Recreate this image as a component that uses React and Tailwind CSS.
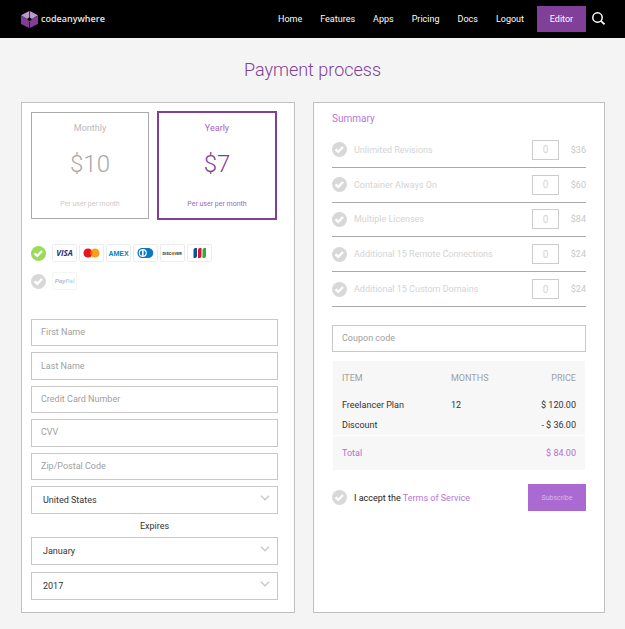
import { useState } from "react";

const NAV_LINKS = ["Home", "Features", "Apps", "Pricing", "Docs", "Logout"];

const FIELDS = ["First Name", "Last Name", "Credit Card Number", "CVV", "Zip/Postal Code"];

const ADDONS = [
  { name: "Unlimited Revisions", price: "$36" },
  { name: "Container Always On", price: "$60" },
  { name: "Multiple Licenses", price: "$84" },
  { name: "Additional 15 Remote Connections", price: "$24" },
  { name: "Additional 15 Custom Domains", price: "$24" },
];

function Logo() {
  return (
    <a href="#" className="flex items-center gap-[3px]" aria-label="codeanywhere">
      <svg viewBox="0 0 17 17" className="h-[17px] w-[17px]" aria-hidden="true">
        <path d="M8.200 0 L0 4.200 L6 8 L8.200 6.500 Z" fill="#b99aca" />
        <path d="M8.800 0 L17 4.200 L11 8 L8.800 6.500 Z" fill="#b99aca" />
        <path d="M0 4.400 L6.500 8.400 L8.200 10.300 V17 L0 13 Z" fill="#803c96" />
        <path d="M17 4.400 L10.500 8.400 L8.800 10.300 V17 L17 13 Z" fill="#803c96" />
      </svg>
      <span className="font-['Open_Sans',sans-serif] text-[9px] leading-4 font-semibold text-gray-200">
        codeanywhere
      </span>
    </a>
  );
}

function Header() {
  return (
    <header className="flex h-[38px] items-center justify-between bg-black pr-5 pl-[21px]">
      <Logo />
      <div className="flex items-center">
        <nav className="flex items-center gap-[18px] pr-[13px] text-white">
          {NAV_LINKS.map((label) => (
            <a key={label} href="#">
              {label}
            </a>
          ))}
        </nav>
        <button type="button" className="h-[26px] w-[49px] bg-[#803f98] text-white">
          Editor
        </button>
        <button type="button" aria-label="Search" className="pl-[5px] text-white">
          <svg viewBox="0 0 14 14" className="h-[14px] w-[14px]" fill="none" stroke="currentColor">
            <circle cx="6.500" cy="5.500" r="4.700" strokeWidth="1.500" />
            <path d="M9.800 8.900 L13.500 12.300" strokeWidth="1.700" />
          </svg>
        </button>
      </div>
    </header>
  );
}

function RoundCheck({ type = "checkbox", ...props }) {
  return (
    <span className="grid h-[15px] w-[15px] shrink-0">
      <input
        type={type}
        className="col-start-1 row-start-1 h-[15px] w-[15px] appearance-none rounded-full bg-[#d8d8d8] checked:bg-[#9bdb5c]"
        {...props}
      />
      <svg
        viewBox="0 0 15 15"
        className="pointer-events-none col-start-1 row-start-1 h-[15px] w-[15px]"
        fill="none"
        stroke="white"
        strokeWidth="2.400"
        aria-hidden="true"
      >
        <path d="M3.500 7.300 L6.300 9.800 L11 5" />
      </svg>
    </span>
  );
}

function Plan({ name, price, selected, onSelect }) {
  return (
    <button
      type="button"
      aria-pressed={selected}
      onClick={onSelect}
      className={
        selected
          ? "flex h-[109px] flex-1 flex-col items-center justify-between border-2 border-[#803f98] pt-2 pb-[7px] text-[#a566bd]"
          : "flex h-[107px] flex-1 flex-col items-center justify-between border border-[#a9a9a9] pt-2 pb-[7px] text-[#b9b9b9]"
      }
    >
      <span>{name}</span>
      <span
        className={
          selected
            ? "pb-1 text-2xl leading-7 font-light text-[#803f98]"
            : "pb-1 text-2xl leading-7 font-light text-[#a9a9a9]"
        }
      >
        {price}
      </span>
      <span className={selected ? "text-[7px]" : "text-[7px] text-[#d0c8c8]"}>
        Per user per month
      </span>
    </button>
  );
}

function CardBadge({ label, children }) {
  return (
    <svg viewBox="0 0 25 18" className="h-[18px] w-[25px]" role="img" aria-label={label}>
      <rect x="0.500" y="0.500" width="24" height="17" rx="1.500" fill="white" stroke="#ececec" />
      {children}
    </svg>
  );
}

function CardBadges() {
  return (
    <span className="flex gap-[2px]">
      <CardBadge label="Visa">
        <text x="12.500" y="12" textAnchor="middle" fontSize="8" fontWeight="700" fontStyle="italic" fontFamily="Open Sans" fill="#26337a">
          VISA
        </text>
      </CardBadge>
      <CardBadge label="Mastercard">
        <circle cx="9" cy="9" r="4.500" fill="#e8141f" />
        <circle cx="16" cy="9" r="4.500" fill="#f99f1b" />
        <path d="M12.500 6.200 A4.500 4.500 0 0 1 12.500 11.800 A4.500 4.500 0 0 1 12.500 6.200 Z" fill="#ff5f00" />
      </CardBadge>
      <CardBadge label="American Express">
        <text x="12.500" y="12" textAnchor="middle" fontSize="7" fontWeight="700" fontFamily="Liberation Sans" fill="#0d7fc0">
          AMEX
        </text>
      </CardBadge>
      <CardBadge label="Diners Club">
        <path d="M9 4 H15 C22 4 22 14 15 14 H9 C3 14 3 4 9 4 Z" fill="#0a79be" />
        <circle cx="9.800" cy="9" r="4" fill="white" />
        <path d="M9 6.200 C6.200 7.200 6.200 10.800 9 11.800 Z M10.600 6.200 C13.400 7.200 13.400 10.800 10.600 11.800 Z" fill="#0a79be" />
      </CardBadge>
      <CardBadge label="Discover">
        <text x="2.500" y="11" fontSize="4" fontWeight="700" fontFamily="Roboto" fill="#333333">
          DISC
        </text>
        <circle cx="13" cy="9.500" r="1.600" fill="#f47b20" />
        <text x="14.500" y="11" fontSize="4" fontWeight="700" fontFamily="Roboto" fill="#333333">
          VER
        </text>
      </CardBadge>
      <CardBadge label="JCB">
        <path d="M8.500 4 H10 V12 Q10 14 8 14 H6.500 V6 Q6.500 4 8.500 4 Z" fill="#0b4ea2" />
        <path d="M13 4 H14.500 V12 Q14.500 14 12.500 14 H11 V6 Q11 4 13 4 Z" fill="#d7182a" />
        <path d="M17.500 4 H19 V12 Q19 14 17 14 H15.500 V6 Q15.500 4 17.500 4 Z" fill="#2fac3c" />
      </CardBadge>
    </span>
  );
}

function PayPalBadge() {
  return (
    <svg viewBox="0 0 25 18" className="h-[18px] w-[25px] opacity-50" role="img" aria-label="PayPal">
      <rect x="0.500" y="0.500" width="24" height="17" rx="1.500" fill="white" stroke="#ececec" />
      <text x="12.500" y="11" textAnchor="middle" fontSize="6" fontWeight="700" fontStyle="italic" fontFamily="Liberation Sans" fill="#5b6fb0">
        Pay<tspan fill="#4db8ea">Pal</tspan>
      </text>
    </svg>
  );
}

function TextField({ label }) {
  return (
    <input
      type="text"
      aria-label={label}
      placeholder={label}
      className="min-h-0 w-full border border-[#c8c8c8] bg-white px-[9px] pb-px text-gray-800 outline-none placeholder:text-[#a0a0a0] placeholder:opacity-100"
    />
  );
}

function Select({ label, options }) {
  return (
    <span className="grid items-center">
      <select
        aria-label={label}
        className="col-start-1 row-start-1 h-7 w-full appearance-none border border-[#c8c8c8] bg-white px-[11px] text-[#333333]"
      >
        {options.map((option) => (
          <option key={option}>{option}</option>
        ))}
      </select>
      <svg
        viewBox="0 0 10 6"
        className="pointer-events-none col-start-1 row-start-1 mr-2 mb-1 h-[6px] w-[10px] justify-self-end"
        fill="none"
        stroke="#c8c8c8"
        strokeWidth="1.300"
        aria-hidden="true"
      >
        <path d="M1 0.800 L5 4.800 L9 0.800" />
      </svg>
    </span>
  );
}

function PaymentPanel() {
  const [plan, setPlan] = useState("Yearly");
  return (
    <section className="flex flex-col border border-[#c0c0c0] bg-white pt-2 pr-4 pb-3 pl-[9px]">
      <div className="flex items-center gap-2 pr-px">
        <Plan name="Monthly" price="$10" selected={plan === "Monthly"} onSelect={() => setPlan("Monthly")} />
        <Plan name="Yearly" price="$7" selected={plan === "Yearly"} onSelect={() => setPlan("Yearly")} />
      </div>
      <div className="flex flex-col gap-[10px] pt-6">
        <label className="flex items-center gap-[6px]">
          <RoundCheck type="radio" name="method" defaultChecked />
          <CardBadges />
        </label>
        <label className="flex items-center gap-[6px]">
          <RoundCheck type="radio" name="method" />
          <PayPalBadge />
        </label>
      </div>
      <div className="mt-[29px] grid h-[161px] auto-rows-fr gap-[6px]">
        {FIELDS.map((label) => (
          <TextField key={label} label={label} />
        ))}
      </div>
      <div className="flex flex-col pt-[6px]">
        <Select label="Country" options={["United States", "Canada", "Croatia"]} />
        <p className="pt-[5px] pb-1 text-center text-[#333333]">Expires</p>
        <div className="flex flex-col gap-[7px]">
          <Select label="Expiry month" options={["January", "February", "March"]} />
          <Select label="Expiry year" options={["2017", "2018", "2019"]} />
        </div>
      </div>
    </section>
  );
}

function Addon({ name, price }) {
  return (
    <li className="flex items-center border-b border-[#a9a9a9] text-[#d4d4d4]">
      <label className="flex flex-1 items-center gap-[7px]">
        <RoundCheck />
        {name}
      </label>
      <input
        type="text"
        aria-label={`${name} quantity`}
        defaultValue="0"
        className="h-5 w-[27px] border border-[#cccccc] text-center text-[10px]"
      />
      <span className="w-[27px] text-right text-[#c8c8c8]">{price}</span>
    </li>
  );
}

function OrderTable() {
  return (
    <div className="mx-px mt-[9px] bg-[#f7f7f7]">
      <table className="w-full border-collapse text-[#333333]">
        <thead className="text-[#a0a0a0]">
          <tr className="h-[34px]">
            <th className="w-[118px] pl-[9px] text-left font-normal">ITEM</th>
            <th className="text-left font-normal">MONTHS</th>
            <th className="pr-[9px] text-right font-normal">PRICE</th>
          </tr>
        </thead>
        <tbody>
          <tr className="h-5">
            <td className="pl-[9px]">Freelancer Plan</td>
            <td>12</td>
            <td className="pr-[9px] text-right">$ 120.00</td>
          </tr>
          <tr className="h-5">
            <td className="pl-[9px]">Discount</td>
            <td></td>
            <td className="pr-[9px] text-right">- $ 36.00</td>
          </tr>
        </tbody>
        <tfoot className="border-t border-white text-[#b070cc]">
          <tr className="h-[35px]">
            <td className="pl-[9px]">Total</td>
            <td></td>
            <td className="pr-[9px] text-right">$ 84.00</td>
          </tr>
        </tfoot>
      </table>
    </div>
  );
}

function SummaryPanel() {
  return (
    <section className="border border-[#c0c0c0] bg-white px-[18px] pt-2">
      <h2 className="text-[10px] leading-4 text-[#b678d8]">Summary</h2>
      <ul className="mt-[6px] grid h-[174px] auto-rows-fr">
        {ADDONS.map((addon) => (
          <Addon key={addon.name} {...addon} />
        ))}
      </ul>
      <div className="mt-[18px] grid h-[27px]">
        <TextField label="Coupon code" />
      </div>
      <OrderTable />
      <div className="mt-[14px] flex items-center justify-between">
        <div className="flex items-center gap-[7px]">
          <RoundCheck id="terms" />
          <label htmlFor="terms" className="text-[#222222]">
            I accept the{" "}
            <a href="#" className="text-[#b678d8]">
              Terms of Service
            </a>
          </label>
        </div>
        <button type="button" className="h-[27px] w-[58px] bg-[#ab6ad1] text-[7px] text-[#d9b8eb]">
          Subscribe
        </button>
      </div>
    </section>
  );
}

export default function App() {
  return (
    <div className="min-h-screen bg-[#f4f4f4] font-['Roboto',sans-serif] text-[9px] leading-[14px]">
      <Header />
      <h1 className="pt-5 pb-5 text-center text-lg leading-6 font-light text-[#803f98]">
        Payment process
      </h1>
      <main className="grid grid-cols-[274fr_292fr] gap-[18px] pr-5 pb-4 pl-[21px]">
        <PaymentPanel />
        <SummaryPanel />
      </main>
    </div>
  );
}
